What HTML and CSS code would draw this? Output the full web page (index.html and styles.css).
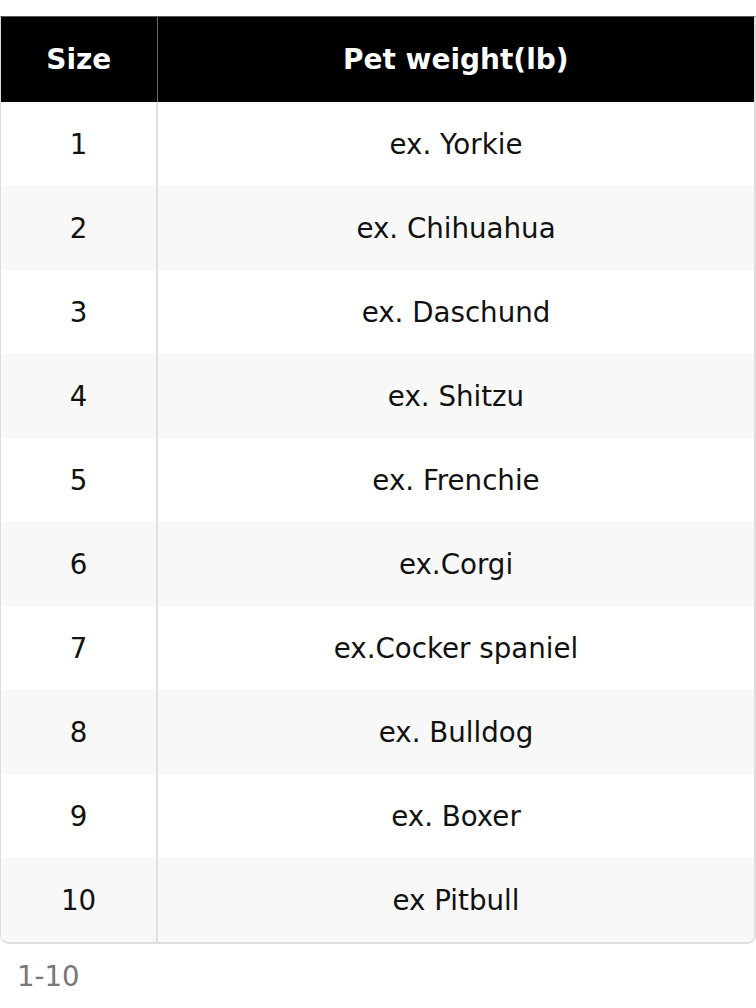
FILE: index.html
```html
<!DOCTYPE html>
<html>
<head>
<meta charset="utf-8">
<link rel="stylesheet" href="styles.css">
</head>
<body>
<div class="page">
  <div class="table-wrap">
    <table class="size-table">
      <colgroup><col class="c-size"><col></colgroup>
      <thead>
        <tr><th>Size</th><th>Pet weight(lb)</th></tr>
      </thead>
      <tbody>
        <tr><td>1</td><td>ex. Yorkie</td></tr>
        <tr><td>2</td><td>ex. Chihuahua</td></tr>
        <tr><td>3</td><td>ex. Daschund</td></tr>
        <tr><td>4</td><td>ex. Shitzu</td></tr>
        <tr><td>5</td><td>ex. Frenchie</td></tr>
        <tr><td>6</td><td>ex.Corgi</td></tr>
        <tr><td>7</td><td>ex.Cocker spaniel</td></tr>
        <tr><td>8</td><td>ex. Bulldog</td></tr>
        <tr><td>9</td><td>ex. Boxer</td></tr>
        <tr><td>10</td><td>ex Pitbull</td></tr>
      </tbody>
    </table>
  </div>
  <div class="footer">1-10</div>
</div>
</body>
</html>
```

FILE: styles.css
```css
html, body {
  margin: 0;
  padding: 0;
  background: #fff;
}
body {
  font-family: "DejaVu Sans", sans-serif;
  color: #111;
}
.page {
  padding-top: 16px;
}
.table-wrap {
  width: 756px;
  box-sizing: border-box;
  border: 1px solid #dcdcdc;
  border-top: 1px solid #5a5a5a;
  border-right: 2px solid #dcdcdc;
  border-bottom: 2px solid #dedede;
  border-radius: 0 0 9px 9px;
  overflow: hidden;
}
.size-table {
  width: 100%;
  border-collapse: collapse;
  table-layout: fixed;
}
.c-size {
  width: 156px;
}
.size-table th {
  background: #000;
  color: #fff;
  font-weight: bold;
  font-size: 28px;
  height: 85px;
  padding: 0;
  text-align: center;
  vertical-align: middle;
}
.size-table th:first-child {
  border-right: 1px solid #6a6a6a;
}
.size-table td {
  height: 84px;
  padding: 0;
  font-size: 27.7px;
  text-align: center;
  vertical-align: middle;
}
.size-table td:first-child {
  border-right: 2px solid #e0e0e0;
}
.size-table tbody tr:nth-child(even) td {
  background: #f8f8f8;
}
.footer {
  margin-top: 17px;
  padding-left: 17px;
  font-size: 27.5px;
  line-height: 31px;
  color: #777;
}
```
